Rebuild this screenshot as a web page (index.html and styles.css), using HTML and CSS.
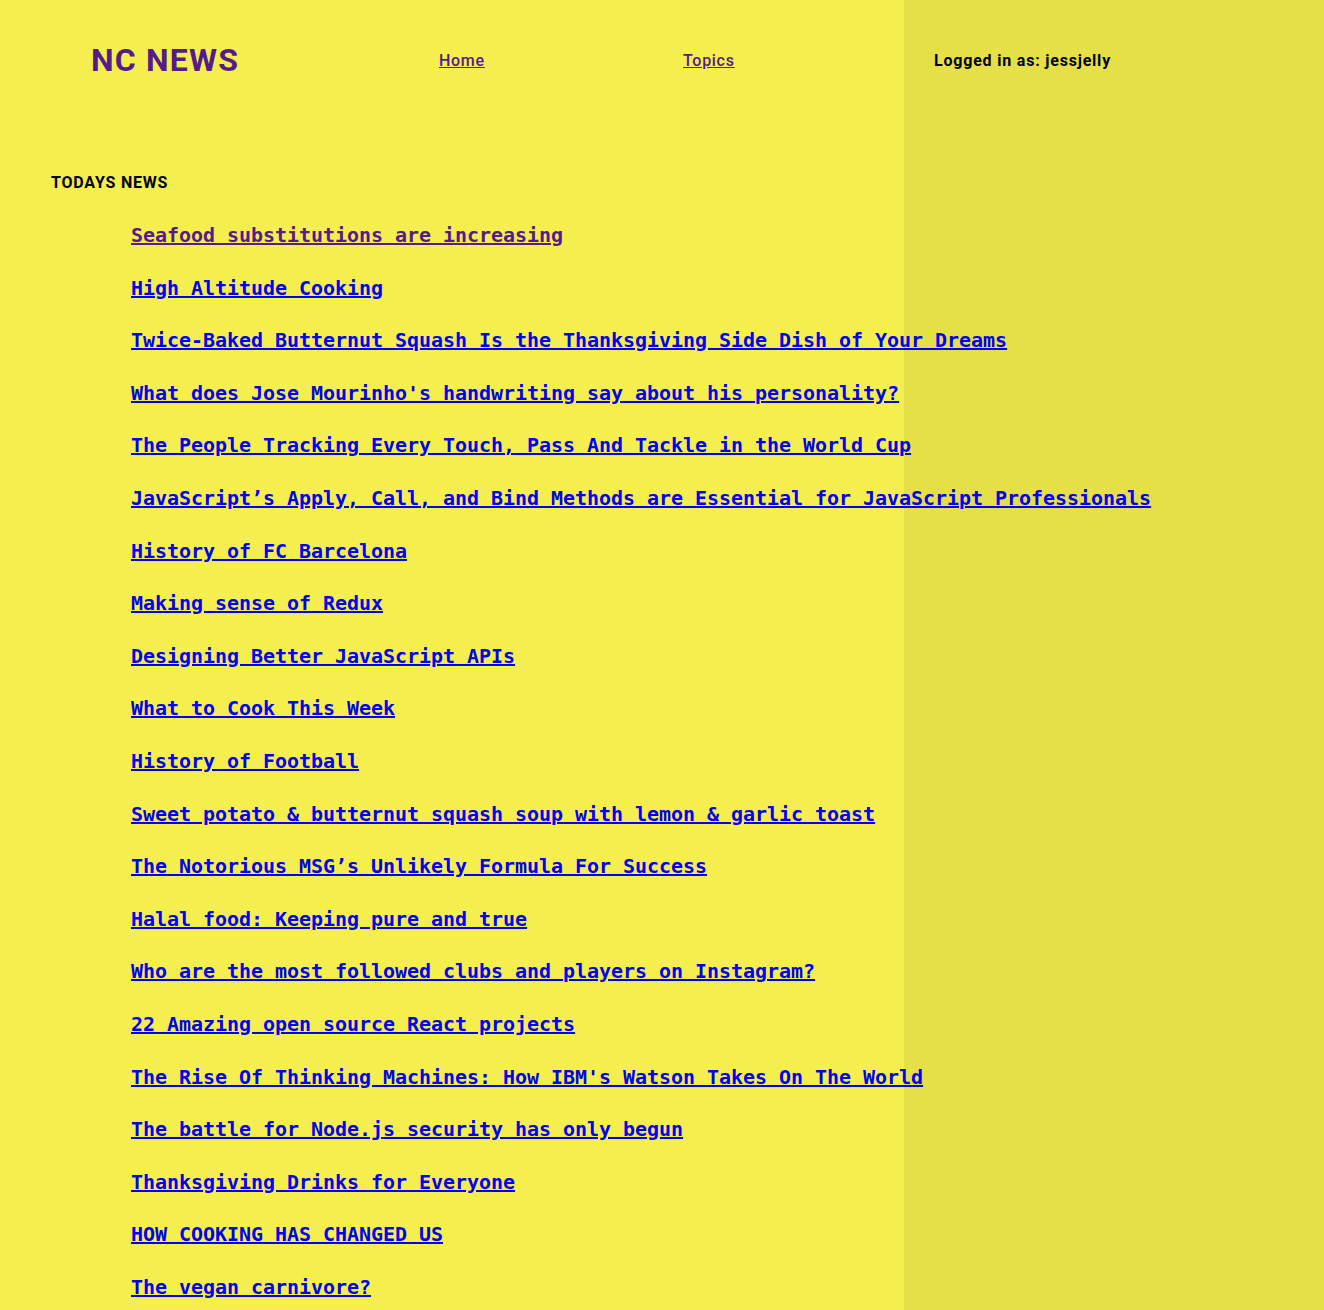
FILE: index.html
```html
<!DOCTYPE html>
<html lang="en">
<head>
<meta charset="utf-8">
<title>NC News</title>
<link rel="stylesheet" href="styles.css">
</head>
<body>
<div class="page">
  <main class="main">
    <header class="header">
      <h1 class="logo">NC NEWS</h1>
      <nav class="nav">
        <a class="nav-link home" href="#home">Home</a>
        <a class="nav-link" href="#topics">Topics</a>
      </nav>
    </header>
    <section class="news">
      <h2 class="news-title">TODAYS NEWS</h2>
      <ul class="articles">
        <li><a class="visited" href="#a1">Seafood substitutions are increasing</a></li>
        <li><a href="#a2">High Altitude Cooking</a></li>
        <li><a href="#a3">Twice-Baked Butternut Squash Is the Thanksgiving Side Dish of Your Dreams</a></li>
        <li><a href="#a4">What does Jose Mourinho's handwriting say about his personality?</a></li>
        <li><a href="#a5">The People Tracking Every Touch, Pass And Tackle in the World Cup</a></li>
        <li><a href="#a6">JavaScript’s Apply, Call, and Bind Methods are Essential for JavaScript Professionals</a></li>
        <li><a href="#a7">History of FC Barcelona</a></li>
        <li><a href="#a8">Making sense of Redux</a></li>
        <li><a href="#a9">Designing Better JavaScript APIs</a></li>
        <li><a href="#a10">What to Cook This Week</a></li>
        <li><a href="#a11">History of Football</a></li>
        <li><a href="#a12">Sweet potato &amp; butternut squash soup with lemon &amp; garlic toast</a></li>
        <li><a href="#a13">The Notorious MSG’s Unlikely Formula For Success</a></li>
        <li><a href="#a14">Halal food: Keeping pure and true</a></li>
        <li><a href="#a15">Who are the most followed clubs and players on Instagram?</a></li>
        <li><a href="#a16">22 Amazing open source React projects</a></li>
        <li><a href="#a17">The Rise Of Thinking Machines: How IBM's Watson Takes On The World</a></li>
        <li><a href="#a18">The battle for Node.js security has only begun</a></li>
        <li><a href="#a19">Thanksgiving Drinks for Everyone</a></li>
        <li><a href="#a20">HOW COOKING HAS CHANGED US</a></li>
        <li><a href="#a21">The vegan carnivore?</a></li>
      </ul>
    </section>
  </main>
  <aside class="sidebar">
    <div class="user">Logged in as: jessjelly</div>
  </aside>
</div>
</body>
</html>
```

FILE: styles.css
```css
html, body {
  margin: 0;
  padding: 0;
}

body {
  background: #f4ee4e;
  font-family: Roboto, "Liberation Sans", sans-serif;
  color: #000;
}

.page {
  display: grid;
  grid-template-columns: 904px 1fr;
  min-height: 1310px;
}

.main {
  min-width: 0;
  position: relative;
  z-index: 1;
}

.sidebar {
  background: #e5df48;
}

.header {
  display: flex;
  align-items: center;
  height: 120px;
  padding-left: 91px;
}

.logo {
  margin: 0;
  width: 348px;
  font-size: 32px;
  font-weight: 700;
  color: #551a8b;
  line-height: 40px;
  letter-spacing: 1.2px;
}

.nav {
  display: flex;
  align-items: center;
}

.nav-link {
  display: inline-block;
  font-size: 16px;
  font-weight: 500;
  letter-spacing: 0.7px;
  color: #551a8b;
  text-decoration: underline;
}

.nav-link.home {
  width: 244px;
}

.user {
  height: 120px;
  display: flex;
  align-items: center;
  padding-left: 30px;
  font-size: 16px;
  font-weight: 700;
  letter-spacing: 0.8px;
}

.news {
  padding-left: 51px;
}

.news-title {
  margin: 53px 0 0;
  font-size: 16px;
  line-height: 20px;
  font-weight: 700;
  letter-spacing: 0.8px;
}

.articles {
  list-style: none;
  margin: 29px 0 0;
  padding: 0 0 0 80px;
  display: flex;
  flex-direction: column;
  gap: 26.6px;
  font-family: "DejaVu Sans Mono", "Liberation Mono", monospace;
  font-size: 20px;
  font-weight: 700;
  letter-spacing: -0.04px;
}

.articles li {
  white-space: nowrap;
  line-height: 26px;
  height: 26px;
}

.articles a {
  color: #0000ee;
  text-decoration: underline;
}

.articles a.visited {
  color: #551a8b;
}
```
